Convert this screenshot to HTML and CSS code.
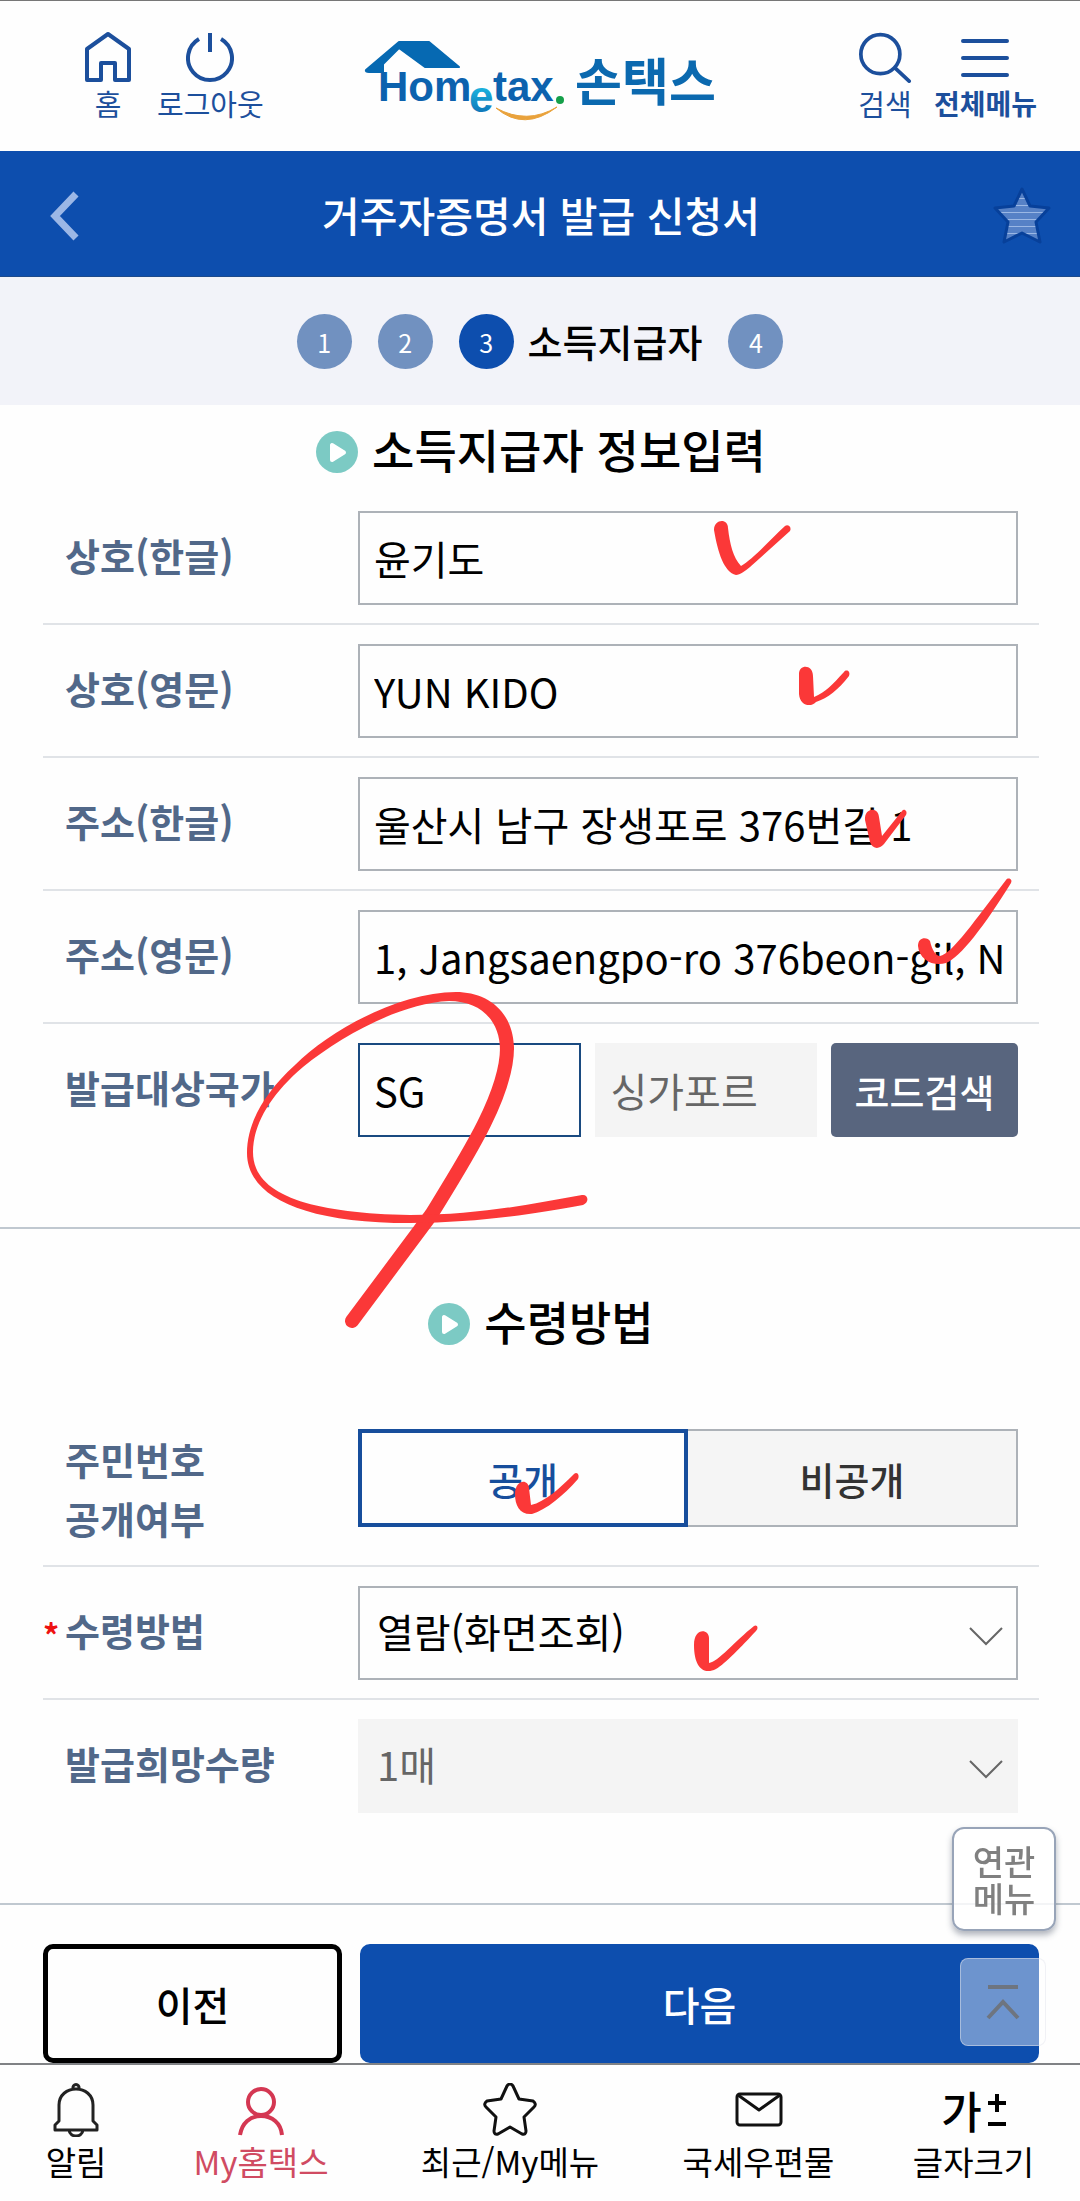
FILE: index.html
```html
<!DOCTYPE html>
<html lang="ko">
<head>
<meta charset="utf-8">
<meta name="viewport" content="width=device-width, initial-scale=1">
<title>거주자증명서 발급 신청서</title>
<link rel="stylesheet" href="styles.css">
</head>
<body>
<div class="page">
  <header class="header">
    <nav class="header-group">
      <a class="header-link" href="#">
        <svg width="46" height="50" viewBox="0 0 46 50" fill="none" stroke="#1c4f9c" stroke-width="4" stroke-linejoin="round"><path d="M23 2 44 17V48H30V31H16V48H2V17Z"/></svg>
        <span>홈</span>
      </a>
      <a class="header-link" href="#">
        <svg width="48" height="50" viewBox="0 0 48 50" fill="none" stroke="#1c4f9c" stroke-width="4"><path d="M13 7A22 22 0 1 0 35 7M24 1V20"/></svg>
        <span>로그아웃</span>
      </a>
    </nav>
    <a class="logo" href="#">
      <svg width="202" height="84" viewBox="0 0 202 84">
        <defs>
          <linearGradient id="eFill" x1="0" y1="0" x2="0" y2="1"><stop offset="0.3" stop-color="#1db5df"/><stop offset="1" stop-color="#0a63ad"/></linearGradient>
        </defs>
        <path d="M2 33 35 5H65L95 30H61L35 11 19 27V35H5Q1 35 2 33Z" fill="#0669b2" stroke="#0669b2" stroke-width="2" stroke-linejoin="round"/>
        <g class="logo-word" fill="#0c62ae">
          <text x="14" y="64" font-size="42">Hom</text>
          <text x="105" y="75" font-size="44" fill="url(#eFill)">e</text>
          <text x="129" y="64" font-size="42">tax</text>
        </g>
        <circle cx="196" cy="63" r="4" fill="#15a04a"/>
        <path d="M132 71Q160 95 193 70Q163 88 132 71Z" fill="#e9a23b" stroke="#e9a23b" stroke-width="1"/>
      </svg>
      <span class="logo-name">손택스</span>
    </a>
    <nav class="header-group header-group-end">
      <a class="header-link" href="#">
        <svg width="56" height="56" viewBox="0 0 56 56" fill="none" stroke="#1c4f9c" stroke-width="4" stroke-linecap="round"><circle cx="23" cy="25" r="21"/><path d="M39 40 54 54"/></svg>
        <span>검색</span>
      </a>
      <a class="header-link header-link-strong" href="#">
        <svg width="50" height="50" viewBox="0 0 50 50" fill="none" stroke="#1c4f9c" stroke-width="4" stroke-linecap="round"><path d="M3 9H47M3 26H47M3 43H47"/></svg>
        <span>전체메뉴</span>
      </a>
    </nav>
  </header>

  <div class="titlebar">
    <button class="icon-button" type="button" aria-label="뒤로">
      <svg width="42" height="54" viewBox="0 0 42 54" fill="none" stroke="#9bb7e6" stroke-width="7"><path d="M28 7 7 29 28 51"/></svg>
    </button>
    <h1 class="titlebar-text">거주자증명서 발급 신청서</h1>
    <button class="icon-button" type="button" aria-label="즐겨찾기">
      <svg width="60" height="60" viewBox="0 0 60 60">
        <defs>
          <pattern id="stripes" width="60" height="7" patternUnits="userSpaceOnUse"><rect width="60" height="7" fill="#5681c6"/><rect width="60" height="1" fill="#9ab7e4"/></pattern>
        </defs>
        <path d="M30 5 38 22 57 24 44 38 48 58 30 49 12 58 16 38 3 24 22 22Z" fill="url(#stripes)" stroke="#07409a" stroke-width="3" stroke-linejoin="round"/>
      </svg>
    </button>
  </div>

  <ol class="steps">
    <li class="step"><span class="step-no">1</span></li>
    <li class="step"><span class="step-no">2</span></li>
    <li class="step" aria-current="step"><span class="step-no step-no-current">3</span><span class="step-name">소득지급자</span></li>
    <li class="step"><span class="step-no">4</span></li>
  </ol>

  <form class="form">
    <section class="section">
      <h2 class="section-title">
        <svg width="42" height="42" viewBox="0 0 42 42"><circle cx="21" cy="21" r="21" fill="#7ccac4"/><path d="M16 14V29L28 21.500Z" fill="#fff" stroke="#fff" stroke-width="4" stroke-linejoin="round"/></svg>
        소득지급자 정보입력
      </h2>
      <div class="rows">
        <div class="row">
          <label class="row-label" for="name-ko">상호(한글)</label>
          <div class="row-field"><input class="input" id="name-ko" type="text" value="윤기도"></div>
        </div>
        <div class="row">
          <label class="row-label" for="name-en">상호(영문)</label>
          <div class="row-field"><input class="input" id="name-en" type="text" value="YUN KIDO"></div>
        </div>
        <div class="row">
          <label class="row-label" for="addr-ko">주소(한글)</label>
          <div class="row-field"><input class="input" id="addr-ko" type="text" value="울산시 남구 장생포로 376번길 1"></div>
        </div>
        <div class="row">
          <label class="row-label" for="addr-en">주소(영문)</label>
          <div class="row-field"><input class="input" id="addr-en" type="text" value="1, Jangsaengpo-ro 376beon-gil, N"></div>
        </div>
        <div class="row">
          <label class="row-label" for="country">발급대상국가</label>
          <div class="row-field">
            <input class="input input-active" id="country" type="text" value="SG">
            <input class="input input-readonly" type="text" value="싱가포르" aria-label="국가명" readonly>
            <button class="code-button" type="button">코드검색</button>
          </div>
        </div>
      </div>
    </section>

    <section class="section section-receive">
      <h2 class="section-title">
        <svg width="42" height="42" viewBox="0 0 42 42"><circle cx="21" cy="21" r="21" fill="#7ccac4"/><path d="M16 14V29L28 21.500Z" fill="#fff" stroke="#fff" stroke-width="4" stroke-linejoin="round"/></svg>
        수령방법
      </h2>
      <div class="rows">
        <div class="row" role="radiogroup" aria-labelledby="open-label">
          <span class="row-label" id="open-label">주민번호<br>공개여부</span>
          <div class="row-field row-field-toggle">
            <label class="toggle"><input class="toggle-input" type="radio" name="open" checked><span class="toggle-face">공개</span></label>
            <label class="toggle"><input class="toggle-input" type="radio" name="open"><span class="toggle-face">비공개</span></label>
          </div>
        </div>
        <div class="row">
          <label class="row-label row-label-required" for="method">수령방법</label>
          <div class="row-field select-wrap">
            <select class="input select" id="method"><option>열람(화면조회)</option></select>
            <svg class="select-arrow" width="34" height="20" viewBox="0 0 34 20" fill="none" stroke="#666" stroke-width="2"><path d="M1 1 17 17 33 1"/></svg>
          </div>
        </div>
        <div class="row">
          <label class="row-label" for="count">발급희망수량</label>
          <div class="row-field select-wrap">
            <select class="input input-readonly select" id="count" disabled><option>1매</option></select>
            <svg class="select-arrow" width="34" height="20" viewBox="0 0 34 20" fill="none" stroke="#666" stroke-width="2"><path d="M1 1 17 17 33 1"/></svg>
          </div>
        </div>
      </div>
    </section>

    <div class="actions">
      <button class="action action-prev" type="button">이전</button>
      <button class="action action-next" type="submit">다음</button>
    </div>
  </form>

  <nav class="tabbar">
    <a class="tab" href="#">
      <svg width="46" height="54" viewBox="0 0 46 54" fill="none" stroke="#222" stroke-width="3" stroke-linejoin="round"><path d="M6 38V22C6 12 14 6 23 6S40 12 40 22V38L44 42V47H2V42ZM20 6C19 0 27 0 26 6M16 47C17 55 29 55 30 47"/></svg>
      <span>알림</span>
    </a>
    <a class="tab tab-active" href="#">
      <svg width="48" height="54" viewBox="0 0 48 54" fill="none" stroke="#d43752" stroke-width="4"><circle cx="24" cy="19" r="13"/><path d="M3 52C5 40 13 33 24 33S44 40 45 52"/></svg>
      <span>My홈택스</span>
    </a>
    <a class="tab" href="#">
      <svg width="54" height="54" viewBox="0 0 54 54" fill="none" stroke="#111" stroke-width="3" stroke-linejoin="round"><path d="M24 3Q27 -1 30 3L36 16 50 18Q54 21 51 24L41 34 43 48Q43 52 39 51L27 44 15 51Q11 52 11 48L13 34 3 24Q0 21 4 18L18 16Z"/></svg>
      <span>최근/My메뉴</span>
    </a>
    <a class="tab" href="#">
      <svg width="48" height="54" viewBox="0 0 48 54" fill="none" stroke="#111" stroke-width="3" stroke-linejoin="round"><rect x="2" y="11" width="44" height="31" rx="3"/><path d="M3 12 24 27 45 12"/></svg>
      <span>국세우편물</span>
    </a>
    <a class="tab" href="#">
      <span class="font-mark"><span>가</span><svg width="18" height="34" viewBox="0 0 18 34" fill="none" stroke="#000" stroke-width="4"><path d="M0 10H18M9 1V19M0 31H18"/></svg></span>
      <span>글자크기</span>
    </a>
  </nav>

  <button class="related" type="button">연관<br>메뉴</button>
  <button class="to-top" type="button" aria-label="맨 위로">
    <svg width="34" height="36" viewBox="0 0 34 36" fill="none" stroke="#6e7580" stroke-width="4"><path d="M2 3H32M2 34 17 18 32 34"/></svg>
  </button>

  <!-- Handwritten marks over the form -->
  <svg class="marks" viewBox="0 0 1080 2201" fill="#fb3838" aria-hidden="true">
    <path d="M714 530C714 519 728 518 728 528C730 545 733 557 741 566C752 560 770 540 785 526C788 524 792 527 790 531L750 567C745 571 740 575 736 575C724 572 718 553 714 530Z"/>
    <path d="M799 674C799 664 813 664 813 676L814 697C826 692 832 685 844 672C846 669 851 671 849 676C838 690 828 698 816 702C812 707 800 707 799 694Z"/>
    <path d="M865 820C864 808 878 806 879 817L882 836 902 811C904 808 908 811 906 815L884 844C880 849 873 850 870 842Z"/>
    <path d="M918 946C918 936 928 937 930 941C932 950 936 956 940 956C952 954 975 920 1006 880C1008 877 1013 879 1011 883C985 925 960 958 946 963C934 967 919 960 918 946Z"/>
    <path d="M515 1494C515 1480 528 1478 529 1488L531 1505C545 1502 560 1488 574 1474C577 1471 580 1475 578 1479C564 1495 546 1510 532 1514C520 1515 515 1506 515 1494Z"/>
    <path d="M694 1645C694 1627 709 1629 709 1638L709 1663C718 1662 735 1641 754 1626C757 1624 759 1628 756 1631C742 1646 725 1664 716 1669C704 1675 694 1668 694 1645Z"/>
    <path d="M352 1321 431 1215C465 1160 507 1095 507 1048" fill="none" stroke="#fb3838" stroke-width="14" stroke-linecap="round"/>
    <path d="M514 1050C514 1010 486 992 456 992C400 992 330 1030 295 1065C262 1095 247 1125 247 1153C247 1195 300 1223 410 1223C480 1223 540 1213 583 1205C590 1202 588 1194 582 1195C530 1204 480 1215 410 1215C310 1213 253 1195 253 1152C253 1125 270 1095 303 1067C340 1037 400 1003 449 1001C480 1001 500 1020 500 1050Z"/>
  </svg>
</div>
</body>
</html>
```
FILE: styles.css
```css
* {
  box-sizing: border-box;
}

body {
  margin: 0;
  background: #fefefe;
  color: #000;
  font-family: "Noto Sans CJK KR", "Noto Sans", sans-serif;
}

button,
input,
select {
  font-family: inherit;
  margin: 0;
}

a {
  color: inherit;
  text-decoration: none;
}

svg {
  display: block;
  flex: none;
}

.page {
  position: relative;
  display: flex;
  flex-direction: column;
  min-height: 100vh;
}

/* Header */
.header {
  display: grid;
  grid-template-columns: 1fr auto 1fr;
  border-top: 1px solid #777;
  padding: 30px 43px 0;
  height: 151px;
}

.header-group {
  display: flex;
  gap: 18px;
  padding-left: 34px;
}

.header-group-end {
  justify-content: flex-end;
  padding: 0;
}

.header-link {
  display: flex;
  flex-direction: column;
  align-items: center;
  min-width: 62px;
  color: #1c4f9c;
  font-size: 29px;
  line-height: 40px;
  white-space: nowrap;
}

.header-link svg {
  height: 52px;
}

.header-link-strong {
  font-size: 28px;
  font-weight: 700;
}

.logo {
  display: flex;
  align-items: center;
  gap: 9px;
  align-self: start;
  padding-top: 6px;
}

.logo-word {
  font-family: "Liberation Sans", sans-serif;
  font-weight: 700;
}

.logo-name {
  color: #0b69af;
  font-size: 51px;
  font-weight: 700;
  line-height: 84px;
}

/* Title bar */
.titlebar {
  display: flex;
  align-items: center;
  justify-content: space-between;
  height: 126px;
  padding: 0 28px 0 48px;
  border-bottom: 1px solid #1c4a8c;
  background: #0d4eae;
  color: #fff;
}

.titlebar-text {
  margin: 0;
  font-size: 41px;
  font-weight: 500;
  line-height: 60px;
}

.icon-button {
  display: flex;
  padding: 0;
  border: 0;
  background: none;
}

/* Steps */
.steps {
  display: flex;
  align-items: center;
  justify-content: center;
  gap: 26px;
  height: 128px;
  margin: 0;
  padding: 0;
  background: #f2f3f9;
  list-style: none;
}

.step {
  display: flex;
  align-items: center;
  gap: 14px;
}

.step-no {
  width: 55px;
  height: 55px;
  border-radius: 50%;
  background: #7191c0;
  color: #fff;
  font-size: 25px;
  line-height: 56px;
  text-align: center;
}

.step-no-current {
  background: #0d4eae;
}

.step-name {
  font-size: 38px;
  font-weight: 500;
  line-height: 56px;
}

/* Form sections */
.section {
  padding: 10px 41px 72px 43px;
  border-bottom: 2px solid #c0c8d0;
}

.section-receive {
  padding-top: 58px;
}

.section-title {
  display: flex;
  align-items: center;
  justify-content: center;
  gap: 14px;
  margin: 0 0 11px;
  font-size: 46px;
  font-weight: 500;
  line-height: 66px;
}

.section-title svg {
  margin-top: 8px;
}

.section-receive .section-title {
  margin-bottom: 57px;
}

.row {
  display: flex;
  padding: 19px 21px 18px 22px;
  border-bottom: 2px solid #e0e3e7;
}

.row:last-child {
  border-bottom: 0;
}

.row-label {
  position: relative;
  flex: none;
  width: 293px;
  padding: 14px 0;
  color: #516889;
  font-size: 38px;
  font-weight: 700;
  line-height: 60px;
}

[role="radiogroup"] .row-label {
  padding: 0;
  line-height: 59px;
}

.row-label-required::before {
  content: "*";
  position: absolute;
  top: 18px;
  left: -22px;
  color: #ee1111;
  font-size: 32px;
}

.row-field {
  display: flex;
  flex: 1;
  gap: 14px;
  min-width: 0;
}

.input {
  flex: 1;
  width: 0;
  min-width: 0;
  height: 94px;
  padding: 0 12px 0 14px;
  border: 2px solid #adb2b8;
  border-radius: 0;
  background: #fefefe;
  color: #000;
  font-size: 40px;
}

.input-active {
  border-color: #194a80;
}

.input-readonly,
.input-readonly:disabled {
  border-color: #f4f4f4;
  background: #f4f4f4;
  color: #666;
  opacity: 1;
}

.code-button {
  width: 187px;
  padding: 0;
  border: 0;
  border-radius: 5px;
  background: #58657e;
  color: #fff;
  font-size: 38px;
  font-weight: 500;
}

.row-field-toggle {
  gap: 0;
  align-self: flex-start;
}

.toggle {
  position: relative;
  flex: 1;
}

.toggle-input {
  position: absolute;
  opacity: 0;
}

.toggle-face {
  display: flex;
  align-items: center;
  justify-content: center;
  height: 98px;
  border: 2px solid #adb2b8;
  border-left: 0;
  background: #f5f5f5;
  color: #333;
  font-size: 38px;
  font-weight: 500;
}

.toggle-input:checked + .toggle-face {
  border: 4px solid #174e9c;
  background: #fefefe;
  color: #174e9c;
}

.select-wrap {
  position: relative;
  align-items: center;
}

.select {
  appearance: none;
  padding: 0 60px 4px 17px;
}

.select-arrow {
  position: absolute;
  right: 15px;
  margin-top: 8px;
  pointer-events: none;
}

/* Previous / next */
.actions {
  display: grid;
  grid-template-columns: 299fr 679fr;
  gap: 18px;
  padding: 39px 41px 0 43px;
}

.action {
  height: 119px;
  border: 5px solid #000;
  border-radius: 10px;
  background: #fefefe;
  color: #000;
  font-size: 40px;
  font-weight: 500;
}

.action-next {
  border-color: #0d4eae;
  background: #0d4eae;
  color: #fff;
}

/* Bottom tab bar */
.tabbar {
  display: grid;
  flex: 1;
  grid-template-columns: 152fr 218fr 280fr 217fr 213fr;
  padding-top: 18px;
  border-top: 2px solid #808285;
  background: #fefefe;
}

.tab {
  display: flex;
  flex-direction: column;
  align-items: center;
  font-size: 33px;
  line-height: 48px;
  white-space: nowrap;
}

.tab-active {
  color: #d04b62;
}

.font-mark {
  display: flex;
  align-items: center;
  gap: 6px;
  height: 54px;
  font-size: 44px;
  font-weight: 500;
}

/* Floating buttons */
.related,
.to-top {
  position: fixed;
  padding: 0;
}

.related {
  right: 24px;
  bottom: 270px;
  width: 104px;
  height: 104px;
  border: 2px solid #98a4b8;
  border-radius: 12px;
  background: rgba(255, 255, 255, 0.8);
  box-shadow: 0 4px 6px rgba(60, 70, 90, 0.4);
  color: #808080;
  font-size: 34px;
  font-weight: 500;
  line-height: 37px;
}

.to-top {
  display: flex;
  align-items: center;
  justify-content: center;
  right: 34px;
  bottom: 155px;
  width: 86px;
  height: 88px;
  border: 1px solid rgba(225, 228, 235, 0.5);
  border-radius: 8px;
  background: rgba(255, 255, 255, 0.4);
}

.marks {
  position: absolute;
  top: 0;
  left: 0;
  width: 100%;
  pointer-events: none;
}
```
